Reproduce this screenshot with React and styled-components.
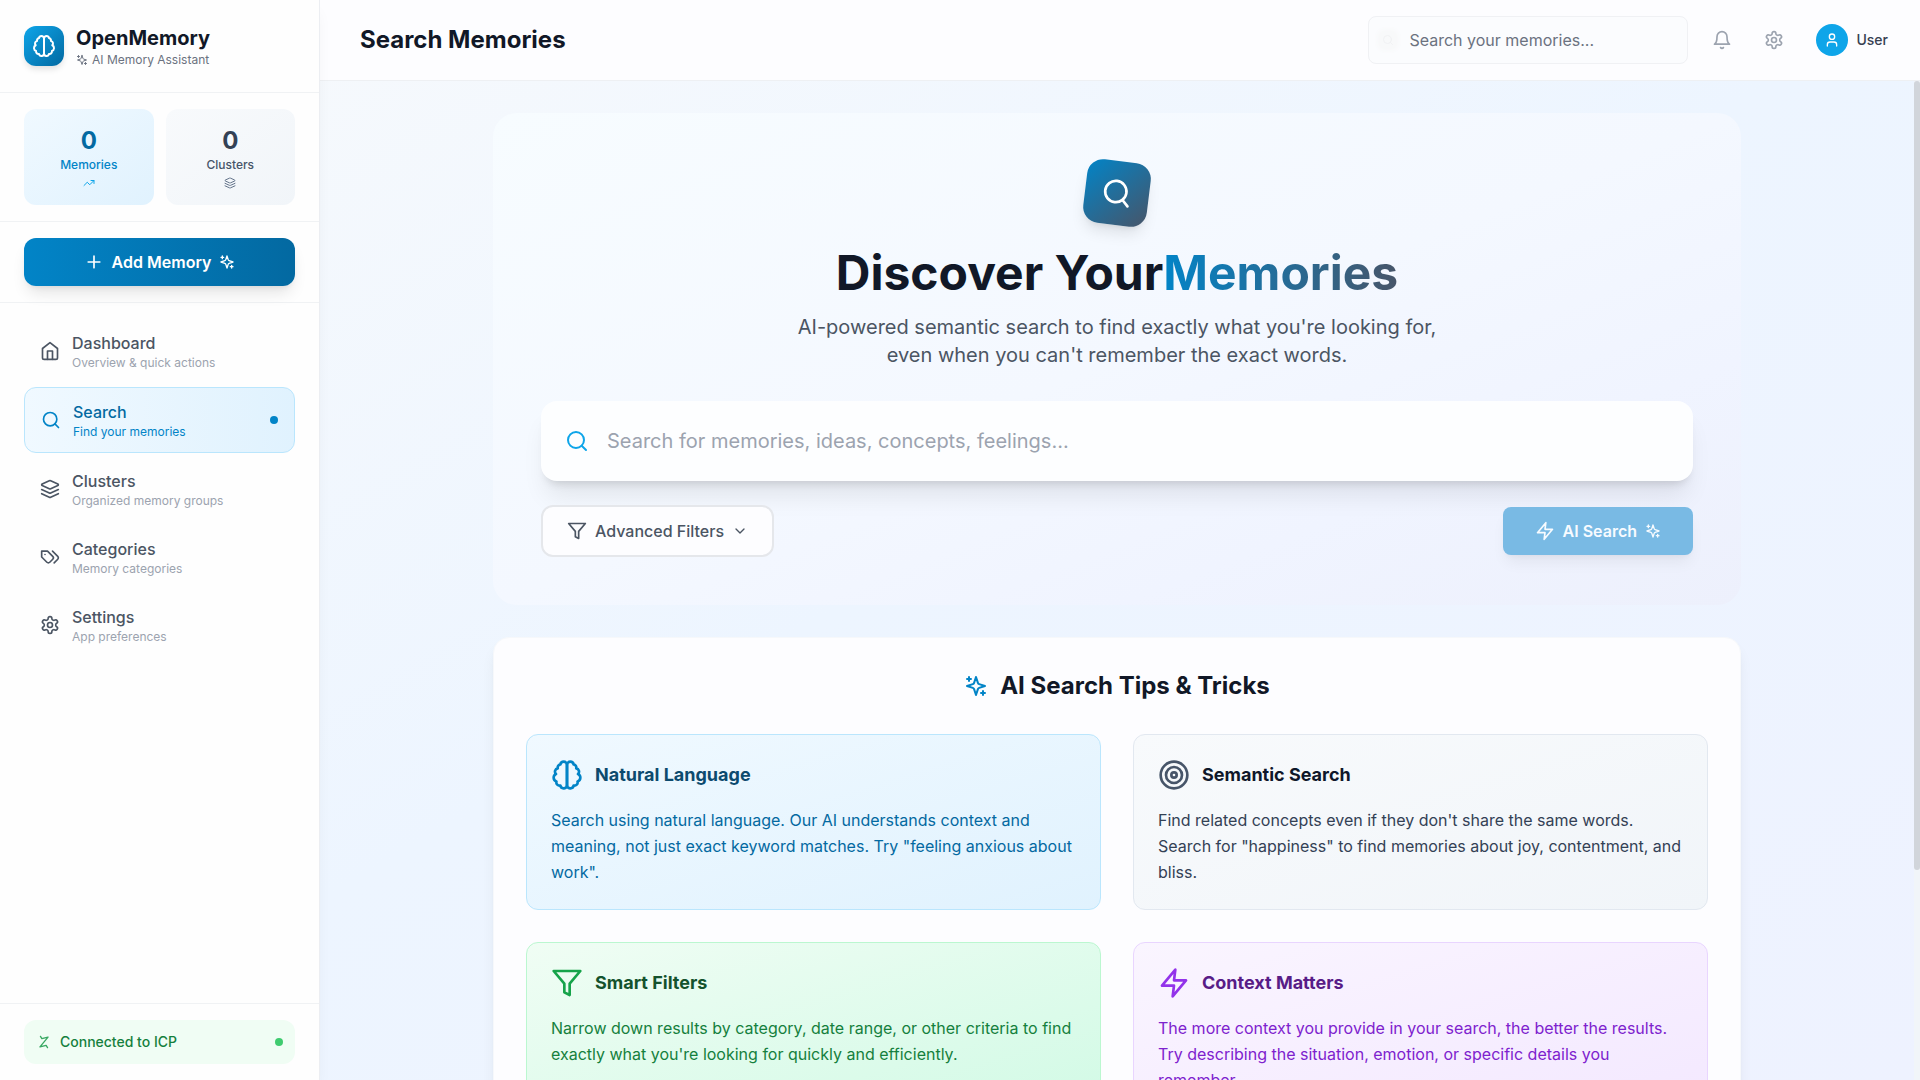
import React from "react";
import styled, { createGlobalStyle, css } from "styled-components";

const GlobalStyle = createGlobalStyle`
  *, *::before, *::after { box-sizing: border-box; }
  body {
    margin: 0;
    overflow: hidden;
    font-family: Inter, "Liberation Sans", sans-serif;
    font-size: 16px;
    line-height: 24px;
    color: #111827;
    -webkit-font-smoothing: antialiased;
  }
  h1, h2, h3, p, ul { margin: 0; padding: 0; }
  ul { list-style: none; }
  button, input { font: inherit; color: inherit; }
  a { color: inherit; text-decoration: none; }
`;

/* ---------- icons ---------- */

const Svg = styled.svg`
  display: block;
  flex: none;
  width: ${(p) => p.$size}px;
  height: ${(p) => p.$size}px;
  fill: none;
  stroke: currentColor;
  stroke-width: 2;
  stroke-linecap: round;
  stroke-linejoin: round;
  transform: rotate(${(p) => p.$turn || 0}deg);
`;

const shapes = {
  brain: (
    <>
      <path d="M9.5 2A2.5 2.5 0 0 1 12 4.5v15a2.5 2.5 0 0 1-4.96.44 2.5 2.5 0 0 1-2.96-3.08 3 3 0 0 1-.34-5.58 2.5 2.5 0 0 1 1.32-4.24 2.5 2.5 0 0 1 1.98-3A2.5 2.5 0 0 1 9.5 2Z" />
      <path d="M14.5 2A2.5 2.5 0 0 0 12 4.5v15a2.5 2.5 0 0 0 4.96.44 2.5 2.5 0 0 0 2.96-3.08 3 3 0 0 0 .34-5.58 2.5 2.5 0 0 0-1.32-4.24 2.5 2.5 0 0 0-1.98-3A2.5 2.5 0 0 0 14.5 2Z" />
    </>
  ),
  sparkles: (
    <>
      <path d="m12 3-1.912 5.813a2 2 0 0 1-1.275 1.275L3 12l5.813 1.912a2 2 0 0 1 1.275 1.275L12 21l1.912-5.813a2 2 0 0 1 1.275-1.275L21 12l-5.813-1.912a2 2 0 0 1-1.275-1.275L12 3Z" />
      <path d="M5 3v4M19 17v4M3 5h4M17 19h4" />
    </>
  ),
  trend: (
    <>
      <path d="M22 7l-8.500 8.500-5-5L2 17" />
      <path d="M16 7h6v6" />
    </>
  ),
  layers: (
    <>
      <path d="m12.830 2.180a2 2 0 0 0-1.660 0L2.600 6.080a1 1 0 0 0 0 1.830l8.580 3.910a2 2 0 0 0 1.660 0l8.580-3.900a1 1 0 0 0 0-1.830Z" />
      <path d="m22 17.650-9.170 4.160a2 2 0 0 1-1.660 0L2 17.650" />
      <path d="m22 12.650-9.170 4.160a2 2 0 0 1-1.660 0L2 12.650" />
    </>
  ),
  plus: <path d="M5 12h14M12 5v14" />,
  home: (
    <>
      <path d="m3 9 9-7 9 7v11a2 2 0 0 1-2 2H5a2 2 0 0 1-2-2z" />
      <path d="M9 22V12h6v10" />
    </>
  ),
  search: (
    <>
      <circle cx="11" cy="11" r="8" />
      <path d="m21 21-4.300-4.300" />
    </>
  ),
  tags: (
    <>
      <path d="M9 5H2v7l6.290 6.290c.940.940 2.480.940 3.420 0l3.580-3.580c.940-.940.940-2.480 0-3.420L9 5Z" />
      <path d="M6 9.010V9" />
      <path d="m15 5 6.300 6.300a2.400 2.400 0 0 1 0 3.400L17 19" />
    </>
  ),
  gear: (
    <>
      <path d="M12.220 2h-.440a2 2 0 0 0-2 2v.180a2 2 0 0 1-1 1.730l-.430.250a2 2 0 0 1-2 0l-.150-.080a2 2 0 0 0-2.730.730l-.220.380a2 2 0 0 0 .730 2.730l.150.100a2 2 0 0 1 1 1.720v.510a2 2 0 0 1-1 1.740l-.150.090a2 2 0 0 0-.730 2.730l.220.380a2 2 0 0 0 2.730.730l.150-.080a2 2 0 0 1 2 0l.430.250a2 2 0 0 1 1 1.730V20a2 2 0 0 0 2 2h.440a2 2 0 0 0 2-2v-.180a2 2 0 0 1 1-1.730l.430-.250a2 2 0 0 1 2 0l.150.080a2 2 0 0 0 2.730-.730l.220-.390a2 2 0 0 0-.730-2.730l-.150-.080a2 2 0 0 1-1-1.740v-.500a2 2 0 0 1 1-1.740l.150-.090a2 2 0 0 0 .730-2.730l-.220-.380a2 2 0 0 0-2.730-.730l-.150.080a2 2 0 0 1-2 0l-.430-.250a2 2 0 0 1-1-1.730V4a2 2 0 0 0-2-2z" />
      <circle cx="12" cy="12" r="3" />
    </>
  ),
  bell: (
    <>
      <path d="M6 8a6 6 0 0 1 12 0c0 7 3 9 3 9H3s3-2 3-9" />
      <path d="M10.300 21a1.940 1.940 0 0 0 3.400 0" />
    </>
  ),
  user: (
    <>
      <path d="M19 21v-2a4 4 0 0 0-4-4H9a4 4 0 0 0-4 4v2" />
      <circle cx="12" cy="7" r="4" />
    </>
  ),
  filter: <path d="M22 3H2l8 9.460V19l4 2v-8.540L22 3Z" />,
  zap: <path d="M13 2 3 14h9l-1 8 10-12h-9l1-8Z" />,
  chevron: <path d="m6 9 6 6 6-6" />,
  target: (
    <>
      <circle cx="12" cy="12" r="10" />
      <circle cx="12" cy="12" r="6" />
      <circle cx="12" cy="12" r="2" />
    </>
  ),
  activity: <path d="M22 12h-4l-3 9L9 3l-3 9H2" />,
};

const Icon = ({ name, size = 20, turn }) => (
  <Svg viewBox="0 0 24 24" $size={size} $turn={turn} aria-hidden="true">
    {shapes[name]}
  </Svg>
);

/* ---------- shell ---------- */

const Shell = styled.div`
  display: grid;
  grid-template-columns: 320px minmax(0, 1fr);
  height: 100vh;
  background: linear-gradient(to bottom right, #f8fafc 0%, #edf5ff 50%, #eef2ff 100%);
`;

const Sidebar = styled.aside`
  display: flex;
  flex-direction: column;
  background: #fefefe;
  border-right: 1px solid #eceef2;
  box-shadow: 0 10px 15px -3px rgba(0, 0, 0, 0.05), 0 4px 6px -4px rgba(0, 0, 0, 0.05);
  z-index: 1;
`;

const Block = styled.div`
  padding: 16px 24px;
  border-bottom: 1px solid #f0f2f4;
`;

const Brand = styled(Block)`
  display: flex;
  align-items: center;
  gap: 12px;
  padding: 24px;
`;

const BrandMark = styled.div`
  display: grid;
  place-items: center;
  width: 40px;
  height: 40px;
  border-radius: 12px;
  color: #fff;
  background: linear-gradient(135deg, #0ea5e9, #0369a1);
  box-shadow: 0 4px 6px -1px rgba(0, 0, 0, 0.12);
`;

const BrandName = styled.p`
  font-size: 20px;
  line-height: 28px;
  font-weight: 700;
`;

const BrandNote = styled.p`
  display: flex;
  align-items: center;
  gap: 4px;
  font-size: 12px;
  line-height: 16px;
  color: #6b7280;
`;

const Stats = styled(Block)`
  display: grid;
  grid-template-columns: 1fr 1fr;
  gap: 12px;
`;

const Stat = styled.div`
  display: flex;
  flex-direction: column;
  align-items: center;
  padding: 16px;
  border-radius: 12px;
  color: ${(p) => (p.$blue ? "#0284c7" : "#475569")};
  background: ${(p) =>
    p.$blue
      ? "linear-gradient(to bottom right, #f0f9ff, #e0f2fe)"
      : "linear-gradient(to bottom right, #f8fafc, #f1f5f9)"};

  strong {
    font-size: 24px;
    line-height: 32px;
    font-weight: 700;
    color: ${(p) => (p.$blue ? "#0369a1" : "#334155")};
  }
  span {
    margin-bottom: 4px;
    font-size: 12px;
    line-height: 16px;
    font-weight: 500;
  }
  svg { color: ${(p) => (p.$blue ? "#0ea5e9" : "#64748b")}; }
`;

const AddButton = styled.button`
  display: flex;
  align-items: center;
  justify-content: center;
  gap: 8px;
  width: 100%;
  padding: 12px 16px;
  border: 0;
  border-radius: 12px;
  color: #fff;
  font-weight: 600;
  background: linear-gradient(90deg, #0284c7, #0369a1);
  box-shadow: 0 10px 15px -3px rgba(0, 0, 0, 0.1), 0 4px 6px -4px rgba(0, 0, 0, 0.1);
`;

const Nav = styled.nav`
  flex: 1;
  padding: 16px 24px;

  ul {
    display: flex;
    flex-direction: column;
    gap: 4px;
  }
`;

const NavLink = styled.a`
  display: flex;
  align-items: center;
  gap: 12px;
  padding: 12px 16px;
  border-radius: 12px;
  color: #4b5563;

  ${(p) =>
    p.$active &&
    css`
      border: 1px solid #bae6fd;
      color: #0284c7;
      background: linear-gradient(90deg, #f0f9ff, #e0f2fe);
    `}

  strong {
    display: block;
    font-weight: 500;
    color: ${(p) => (p.$active ? "#0369a1" : "#4b5563")};
  }
  small {
    display: block;
    font-size: 12px;
    line-height: 16px;
    color: ${(p) => (p.$active ? "#0284c7" : "#9ca3af")};
  }
`;

const Dot = styled.span`
  width: 8px;
  height: 8px;
  margin-left: auto;
  border-radius: 50%;
  background: ${(p) => p.$color};
`;

const SideFooter = styled.div`
  padding: 16px 24px;
  border-top: 1px solid #f0f2f4;
`;

const Connection = styled.p`
  display: flex;
  align-items: center;
  gap: 8px;
  padding: 12px;
  border-radius: 12px;
  font-size: 14px;
  line-height: 20px;
  font-weight: 500;
  color: #15803d;
  background: #f0fdf4;

  svg { color: #38a862; }
`;

/* ---------- top bar ---------- */

const Page = styled.div`
  display: flex;
  flex-direction: column;
  min-width: 0;
  min-height: 0;
`;

const TopBar = styled.header`
  display: flex;
  align-items: center;
  justify-content: space-between;
  padding: 16px 24px 16px 40px;
  background: #fdfdff;
  border-bottom: 1px solid #eef0f3;
`;

const PageTitle = styled.h1`
  font-size: 24px;
  line-height: 32px;
  font-weight: 700;
`;

const Tools = styled.div`
  display: flex;
  align-items: center;
  gap: 16px;
`;

const QuickSearch = styled.label`
  display: flex;
  align-items: center;
  gap: 12px;
  width: 320px;
  height: 48px;
  padding: 0 12px 0 10px;
  border: 1px solid #f0f1f4;
  border-radius: 8px;
  background: #fbfcfe;

  input {
    flex: 1;
    min-width: 0;
    padding: 0;
    border: 0;
    outline: 0;
    background: transparent;
  }
  input::placeholder { color: #6b7280; opacity: 1; }
`;

const SoftGlyph = styled.span`
  display: grid;
  place-items: center;
  width: 18px;
  height: 18px;
  border-radius: 6px;
  color: #f1f2f4;
  background: #f8f9fa;
  box-shadow: 0 0 4px 2px #f8f9fa;
`;

const IconButton = styled.button`
  display: grid;
  place-items: center;
  width: 36px;
  height: 36px;
  padding: 0;
  border: 0;
  border-radius: 8px;
  color: #9ca3af;
  background: transparent;
`;

const Account = styled.button`
  display: flex;
  align-items: center;
  gap: 8px;
  padding: 8px;
  border: 0;
  font-size: 14px;
  line-height: 20px;
  font-weight: 500;
  color: #374151;
  background: transparent;
`;

const Avatar = styled.span`
  display: grid;
  place-items: center;
  width: 32px;
  height: 32px;
  border-radius: 50%;
  color: #fff;
  background: #0ea5e9;
`;

/* ---------- content ---------- */

const Viewport = styled.div`
  display: flex;
  flex: 1;
  min-height: 0;
`;

const Scroller = styled.main`
  flex: 1;
  min-width: 0;
  overflow-y: auto;
  scrollbar-width: none;
`;

const Rail = styled.div`
  flex: none;
  width: 6px;
  background: #f1f5f9;

  &::before {
    content: "";
    display: block;
    height: 79%;
    border-radius: 3px;
    background: #d1d5db;
  }
`;

const Content = styled.div`
  display: flex;
  flex-direction: column;
  gap: 32px;
  max-width: 1280px;
  margin: 0 auto;
  padding: 32px 16px 112px;
`;

const Hero = styled.section`
  display: flex;
  flex-direction: column;
  align-items: center;
  padding: 48px;
  border-radius: 24px;
  background: linear-gradient(to bottom right, #f7fcff 0%, #f4f8ff 50%, #f0f4ff 75%, #edf0fc 100%);
`;

const HeroMark = styled.div`
  display: grid;
  place-items: center;
  width: 64px;
  height: 64px;
  margin-bottom: 24px;
  border-radius: 16px;
  color: #fff;
  background: linear-gradient(135deg, #0284c7, #475569);
  box-shadow: 0 10px 15px -3px rgba(0, 0, 0, 0.1), 0 4px 6px -4px rgba(0, 0, 0, 0.1);
  transform: rotate(7deg);
`;

const HeroTitle = styled.h2`
  display: flex;
  font-size: 48px;
  line-height: 48px;
  font-weight: 700;

  span {
    color: transparent;
    background: linear-gradient(90deg, #0284c7, #475569);
    -webkit-background-clip: text;
    background-clip: text;
  }
`;

const HeroText = styled.p`
  max-width: 672px;
  margin: 16px 0 32px;
  font-size: 20px;
  line-height: 28px;
  text-align: center;
  color: #4b5563;
`;

const SearchField = styled.label`
  display: flex;
  align-items: center;
  gap: 18px;
  width: 100%;
  height: 80px;
  padding: 0 24px;
  border-radius: 16px;
  color: #0ea5e9;
  background: #fdfeff;
  box-shadow: 0 20px 25px -5px rgba(0, 0, 0, 0.08), 0 8px 10px -6px rgba(0, 0, 0, 0.14);

  input {
    flex: 1;
    min-width: 0;
    padding: 0;
    border: 0;
    outline: 0;
    font-size: 20px;
    line-height: 28px;
    color: #111827;
    background: transparent;
  }
  input::placeholder { color: #9ca3af; opacity: 1; }
`;

const Actions = styled.div`
  display: flex;
  align-items: center;
  justify-content: space-between;
  width: 100%;
  margin-top: 24px;
`;

const ActionButton = styled.button`
  display: flex;
  align-items: center;
  gap: 8px;
  padding: 12px ${(p) => (p.$primary ? 32 : 24)}px;
  border: ${(p) => (p.$primary ? "0" : "2px solid #e5e7eb")};
  border-radius: ${(p) => (p.$primary ? 8 : 12)}px;
  font-weight: ${(p) => (p.$primary ? 600 : 500)};
  color: ${(p) => (p.$primary ? "#f7fbff" : "#4b5563")};
  background: ${(p) => (p.$primary ? "#79bae4" : "#fdfdff")};
  box-shadow: ${(p) =>
    p.$primary ? "0 10px 15px -3px rgba(0, 0, 0, 0.06), 0 4px 6px -4px rgba(0, 0, 0, 0.06)" : "none"};
`;

const Tips = styled.section`
  padding: 32px;
  border: 1px solid #f6f8fb;
  border-radius: 16px;
  background: #fdfdff;
  box-shadow: 0 10px 15px -3px rgba(0, 0, 0, 0.08), 0 4px 6px -4px rgba(0, 0, 0, 0.08);
`;

const TipsTitle = styled.h2`
  display: flex;
  align-items: center;
  justify-content: center;
  gap: 12px;
  margin-bottom: 32px;
  font-size: 24px;
  line-height: 32px;
  font-weight: 700;

  svg { color: #0284c7; }
`;

const TipGrid = styled.div`
  display: grid;
  grid-template-columns: 1fr 1fr;
  gap: 32px;
`;

const tones = {
  sky: { line: "#bae6fd", from: "#f0f9ff", to: "#e0f2fe", icon: "#0284c7", title: "#0c4a6e", text: "#0369a1" },
  slate: { line: "#e2e8f0", from: "#f8fafc", to: "#f1f5f9", icon: "#475569", title: "#0f172a", text: "#334155" },
  green: { line: "#bbf7d0", from: "#f0fdf4", to: "#d1fae5", icon: "#16a34a", title: "#14532d", text: "#15803d" },
  purple: { line: "#e9d5ff", from: "#faf5ff", to: "#f3e8ff", icon: "#9333ea", title: "#581c87", text: "#7e22ce" },
};

const TipCard = styled.article`
  padding: 24px;
  border: 1px solid ${(p) => tones[p.$tone].line};
  border-radius: 12px;
  color: ${(p) => tones[p.$tone].text};
  background: linear-gradient(to bottom right, ${(p) => tones[p.$tone].from}, ${(p) => tones[p.$tone].to});

  header {
    display: flex;
    align-items: center;
    gap: 12px;
    margin-bottom: 16px;
    color: ${(p) => tones[p.$tone].icon};
  }
  h3 {
    font-size: 18px;
    line-height: 28px;
    font-weight: 700;
    color: ${(p) => tones[p.$tone].title};
  }
  p { line-height: 26px; }
`;

const navItems = [
  { icon: "home", title: "Dashboard", note: "Overview & quick actions" },
  { icon: "search", title: "Search", note: "Find your memories", active: true },
  { icon: "layers", title: "Clusters", note: "Organized memory groups" },
  { icon: "tags", title: "Categories", note: "Memory categories" },
  { icon: "gear", title: "Settings", note: "App preferences" },
];

const tips = [
  {
    tone: "sky",
    icon: "brain",
    title: "Natural Language",
    text: 'Search using natural language. Our AI understands context and meaning, not just exact keyword matches. Try "feeling anxious about work".',
  },
  {
    tone: "slate",
    icon: "target",
    title: "Semantic Search",
    text: "Find related concepts even if they don't share the same words. Search for \"happiness\" to find memories about joy, contentment, and bliss.",
  },
  {
    tone: "green",
    icon: "filter",
    title: "Smart Filters",
    text: "Narrow down results by category, date range, or other criteria to find exactly what you're looking for quickly and efficiently.",
  },
  {
    tone: "purple",
    icon: "zap",
    title: "Context Matters",
    text: "The more context you provide in your search, the better the results. Try describing the situation, emotion, or specific details you remember.",
  },
];

export default function App() {
  return (
    <>
      <GlobalStyle />
      <Shell>
        <Sidebar>
          <Brand>
            <BrandMark>
              <Icon name="brain" size={24} />
            </BrandMark>
            <div>
              <BrandName>OpenMemory</BrandName>
              <BrandNote>
                <Icon name="sparkles" size={12} />
                AI Memory Assistant
              </BrandNote>
            </div>
          </Brand>

          <Stats>
            <Stat $blue>
              <strong>0</strong>
              <span>Memories</span>
              <Icon name="trend" size={12} />
            </Stat>
            <Stat>
              <strong>0</strong>
              <span>Clusters</span>
              <Icon name="layers" size={12} />
            </Stat>
          </Stats>

          <Block>
            <AddButton type="button">
              <Icon name="plus" />
              Add Memory
              <Icon name="sparkles" size={16} />
            </AddButton>
          </Block>

          <Nav aria-label="Main">
            <ul>
              {navItems.map((item) => (
                <li key={item.title}>
                  <NavLink
                    href={`#${item.title.toLowerCase()}`}
                    $active={item.active}
                    aria-current={item.active ? "page" : undefined}
                  >
                    <Icon name={item.icon} />
                    <span>
                      <strong>{item.title}</strong>
                      <small>{item.note}</small>
                    </span>
                    {item.active && <Dot $color="#0284c7" />}
                  </NavLink>
                </li>
              ))}
            </ul>
          </Nav>

          <SideFooter>
            <Connection>
              <Icon name="activity" size={16} turn={58} />
              Connected to ICP
              <Dot $color="#3fcb6f" />
            </Connection>
          </SideFooter>
        </Sidebar>

        <Page>
          <TopBar>
            <PageTitle>Search Memories</PageTitle>
            <Tools>
              <QuickSearch>
                <SoftGlyph>
                  <Icon name="search" size={12} />
                </SoftGlyph>
                <input type="search" aria-label="Search your memories" placeholder="Search your memories..." />
              </QuickSearch>
              <IconButton type="button" aria-label="Notifications">
                <Icon name="bell" />
              </IconButton>
              <IconButton type="button" aria-label="Settings">
                <Icon name="gear" />
              </IconButton>
              <Account type="button">
                <Avatar>
                  <Icon name="user" size={16} />
                </Avatar>
                User
              </Account>
            </Tools>
          </TopBar>

          <Viewport>
            <Scroller>
              <Content>
                <Hero>
                  <HeroMark>
                    <Icon name="search" size={32} />
                  </HeroMark>
                  <HeroTitle>
                    Discover Your <span>Memories</span>
                  </HeroTitle>
                  <HeroText>
                    AI-powered semantic search to find exactly what you're looking for, even when you can't remember
                    the exact words.
                  </HeroText>
                  <SearchField>
                    <Icon name="search" size={24} />
                    <input
                      type="text"
                      aria-label="Search for memories"
                      placeholder="Search for memories, ideas, concepts, feelings..."
                    />
                  </SearchField>
                  <Actions>
                    <ActionButton type="button">
                      <Icon name="filter" />
                      Advanced Filters
                      <Icon name="chevron" size={16} />
                    </ActionButton>
                    <ActionButton type="button" $primary>
                      <Icon name="zap" />
                      AI Search
                      <Icon name="sparkles" size={16} />
                    </ActionButton>
                  </Actions>
                </Hero>

                <Tips>
                  <TipsTitle>
                    <Icon name="sparkles" size={24} />
                    AI Search Tips &amp; Tricks
                  </TipsTitle>
                  <TipGrid>
                    {tips.map((tip) => (
                      <TipCard key={tip.title} $tone={tip.tone}>
                        <header>
                          <Icon name={tip.icon} size={32} />
                          <h3>{tip.title}</h3>
                        </header>
                        <p>{tip.text}</p>
                      </TipCard>
                    ))}
                  </TipGrid>
                </Tips>
              </Content>
            </Scroller>
            <Rail />
          </Viewport>
        </Page>
      </Shell>
    </>
  );
}
